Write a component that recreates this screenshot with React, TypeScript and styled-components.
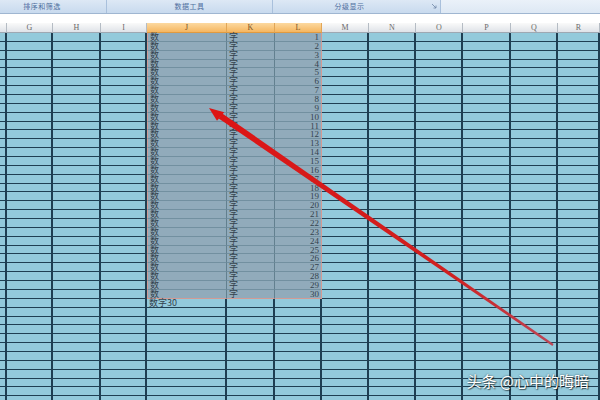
import styled, { createGlobalStyle } from "styled-components";

const COLS = [7, 46, 48, 46, 80, 48, 47, 47, 47, 47, 48, 47, 42];
const LETTERS = ["", "G", "H", "I", "J", "K", "L", "M", "N", "O", "P", "Q", "R"];
const SEL = [4, 5, 6];
const ROW_H = 8.87;
const DATA_ROWS = 30;
const TOTAL_ROWS = 42;
const template = COLS.map((w) => `${w}px`).join(" ");

const GlobalStyle = createGlobalStyle`
  html, body {
    margin: 0;
    padding: 0;
    background: #ffffff;
  }
`;

const App = () => {
  const rows = Array.from({ length: TOTAL_ROWS }, (_, i) => i);

  const cellText = (row: number, col: number) => {
    if (row < DATA_ROWS) {
      if (col === 4) return "数";
      if (col === 5) return "字";
      if (col === 6) return String(row + 1);
    }
    if (row === DATA_ROWS && col === 4) return "数字30";
    return "";
  };

  return (
    <Page>
      <GlobalStyle />
      <Ribbon>
        <Group $w={107} $pad={22}>
          <GroupLabel>排序和筛选</GroupLabel>
        </Group>
        <Group $w={166}>
          <GroupLabel>数据工具</GroupLabel>
        </Group>
        <Group $w={168} $pad={14}>
          <GroupLabel>分级显示</GroupLabel>
          <Launcher>
            <svg width="6" height="6" viewBox="0 0 6 6">
              <path d="M1 1 L5 5 M5 2.5 L5 5 L2.5 5" stroke="#6f86a6" strokeWidth="0.8" fill="none" />
            </svg>
          </Launcher>
        </Group>
        <RibbonRest />
      </Ribbon>
      <FormulaBand />
      <HeaderRow>
        {LETTERS.map((l, c) => (
          <HeadCell key={c} $sel={SEL.includes(c)}>
            {l}
          </HeadCell>
        ))}
      </HeaderRow>
      <Body>
        {rows.map((r) =>
          COLS.map((_, c) => {
            const sel = r < DATA_ROWS && SEL.includes(c);
            return (
              <Cell
                key={`${r}-${c}`}
                $sel={sel}
                $right={c === 6}
                $edgeL={sel && c === 4}
                $edgeR={sel && c === 6}
                $edgeB={sel && r === DATA_ROWS - 1}
              >
                {cellText(r, c)}
              </Cell>
            );
          })
        )}
      </Body>
      <Arrow width="600" height="400" viewBox="0 0 600 400">
        <defs>
          <linearGradient id="shaft" x1="209" y1="108" x2="553" y2="345" gradientUnits="userSpaceOnUse">
            <stop offset="0" stopColor="#dd1414" />
            <stop offset="0.7" stopColor="#cf2020" />
            <stop offset="1" stopColor="#bd4656" />
          </linearGradient>
        </defs>
        <polygon
          points="222.3,113.4 553.6,344.1 552.4,345.9 218.7,118.4"
          fill="url(#shaft)"
        />
        <polygon points="209,108 224.2,112.2 217,120.8" fill="#dd1414" />
      </Arrow>
      <Watermark>头条 @心中的晦暗</Watermark>
    </Page>
  );
};

export default App;

const Page = styled.div`
  position: relative;
  width: 600px;
  height: 400px;
  overflow: hidden;
  background: #ffffff;
`;

const Ribbon = styled.div`
  display: flex;
  height: 13px;
  border-bottom: 1px solid #9fb6d1;
  background: linear-gradient(#dde8f5, #c8daee);
`;

const Group = styled.div<{ $w: number; $pad?: number }>`
  position: relative;
  display: flex;
  align-items: center;
  justify-content: center;
  box-sizing: border-box;
  width: ${(p) => p.$w}px;
  flex: none;
  padding-right: ${(p) => p.$pad ?? 0}px;
  border-right: 1px solid #a9c0dc;
`;

const GroupLabel = styled.span`
  font-family: "Noto Sans CJK SC", sans-serif;
  font-size: 7px;
  line-height: 13px;
  color: #4f6f9e;
  letter-spacing: 0.5px;
`;

const Launcher = styled.span`
  position: absolute;
  right: 3px;
  top: 3px;
  display: flex;
  width: 6px;
  height: 6px;
`;

const RibbonRest = styled.div`
  flex: 1;
  background: linear-gradient(#eaf1f9, #dde8f4);
`;

const FormulaBand = styled.div`
  height: 9px;
  background: #ffffff;
`;

const HeaderRow = styled.div`
  display: grid;
  grid-template-columns: ${template};
  height: 10px;
`;

const HeadCell = styled.div<{ $sel?: boolean }>`
  box-sizing: border-box;
  border-right: 1px solid ${(p) => (p.$sel ? "#e2a656" : "#b5bcc4")};
  border-bottom: 1px solid ${(p) => (p.$sel ? "#e09a40" : "#9ea8b2")};
  background: ${(p) =>
    p.$sel ? "linear-gradient(#fcd9a0, #f5b660)" : "linear-gradient(#fafafa, #dfe3e8)"};
  color: ${(p) => (p.$sel ? "#7b5426" : "#6a6a6a")};
  font-family: "Liberation Serif", serif;
  font-size: 8px;
  line-height: 9px;
  text-align: center;
`;

const Body = styled.div`
  display: grid;
  grid-template-columns: ${template};
  grid-auto-rows: ${ROW_H}px;
`;

const Cell = styled.div<{
  $sel?: boolean;
  $right?: boolean;
  $edgeL?: boolean;
  $edgeR?: boolean;
  $edgeB?: boolean;
}>`
  box-sizing: border-box;
  height: ${ROW_H}px;
  padding: 0 2px;
  background: ${(p) => (p.$sel ? "#91abbb" : "#93cadb")};
  border-right: ${(p) =>
    p.$edgeR ? "1px solid #d29b95" : p.$sel ? "1px solid #62808f" : "2px solid #1f3f52"};
  border-bottom: ${(p) =>
    p.$edgeB ? "1px solid #d29b95" : p.$sel ? "1px solid #7290a0" : "1.5px solid #1f3f52"};
  border-left: ${(p) => (p.$edgeL ? "1px solid #d29b95" : "none")};
  font-family: ${(p) =>
    p.$right ? `"Liberation Serif", serif` : `"Noto Sans CJK SC", sans-serif`};
  font-size: 9px;
  line-height: 8px;
  color: #34434e;
  text-align: ${(p) => (p.$right ? "right" : "left")};
  white-space: nowrap;
  overflow: visible;
`;

const Arrow = styled.svg`
  position: absolute;
  left: 0;
  top: 0;
  pointer-events: none;
`;

const Watermark = styled.div`
  position: absolute;
  right: 11px;
  bottom: 9px;
  font-family: "Noto Sans CJK SC", sans-serif;
  font-size: 15px;
  color: #ffffff;
  text-shadow: 0 0 2px rgba(0, 0, 0, 0.6), 1px 1px 1px rgba(0, 0, 0, 0.5);
`;
